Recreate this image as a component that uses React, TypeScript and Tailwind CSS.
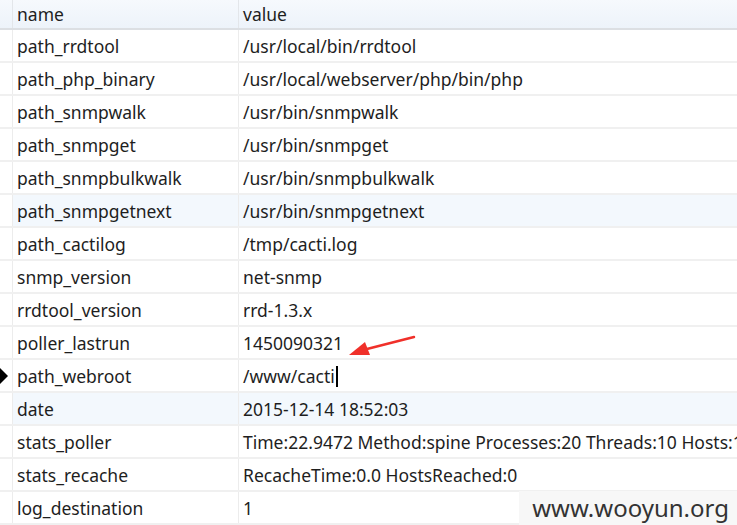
const rows: { name: string; value: string; hl?: boolean; cur?: boolean }[] = [
  { name: 'path_rrdtool', value: '/usr/local/bin/rrdtool' },
  { name: 'path_php_binary', value: '/usr/local/webserver/php/bin/php' },
  { name: 'path_snmpwalk', value: '/usr/bin/snmpwalk' },
  { name: 'path_snmpget', value: '/usr/bin/snmpget' },
  { name: 'path_snmpbulkwalk', value: '/usr/bin/snmpbulkwalk' },
  { name: 'path_snmpgetnext', value: '/usr/bin/snmpgetnext', hl: true },
  { name: 'path_cactilog', value: '/tmp/cacti.log' },
  { name: 'snmp_version', value: 'net-snmp' },
  { name: 'rrdtool_version', value: 'rrd-1.3.x' },
  { name: 'poller_lastrun', value: '1450090321' },
  { name: 'path_webroot', value: '/www/cacti', cur: true },
  { name: 'date', value: '2015-12-14 18:52:03', hl: true },
  { name: 'stats_poller', value: 'Time:22.9472 Method:spine Processes:20 Threads:10 Hosts:1' },
  { name: 'stats_recache', value: 'RecacheTime:0.0 HostsReached:0' },
  { name: 'log_destination', value: '1' },
]

export default function App() {
  return (
    <div
      className="relative w-[737px] h-[525px] overflow-hidden bg-white text-[#1e1e1e] text-[17.5px]"
      style={{ fontFamily: '"Noto Sans", "Open Sans", sans-serif' }}
    >
      {/* header */}
      <div className="grid grid-cols-[13px_226px_1fr] h-[30px] bg-gradient-to-b from-[#f6f9fd] to-[#edf3fa] border-b-2 border-[#dcdfe3]">
        <div className="border-r border-[#e3e6ea]" />
        <div className="border-r border-[#e3e6ea] pl-[4px] flex items-center">name</div>
        <div className="pl-[4px] flex items-center">value</div>
      </div>

      {rows.map((r) => (
        <div
          key={r.name}
          className={`grid grid-cols-[13px_226px_1fr] h-[33px] border-b-2 border-[#f0f0f0] ${
            r.hl ? 'bg-[#f3f8fd]' : 'bg-white'
          }`}
        >
          <div className="border-r border-[#ececec] bg-white flex items-center">
            {r.cur && (
              <svg width="9" height="16" viewBox="0 0 9 16">
                <path d="M0 0 L8 8 L0 16 Z" fill="#000" />
              </svg>
            )}
          </div>
          <div className="border-r border-[#ececec] pl-[4px] pt-[1px] flex items-center whitespace-nowrap">
            {r.name}
          </div>
          <div className="pl-[4px] pt-[1px] flex items-center whitespace-nowrap overflow-hidden">
            {r.value}
            {r.cur && <span className="inline-block w-[2px] h-[21px] bg-black ml-[1px]" />}
          </div>
        </div>
      ))}

      {/* red arrow */}
      <svg className="absolute left-[345px] top-[334px]" width="72" height="26" viewBox="0 0 72 26">
        <path d="M69 3 L18 16" stroke="#f0302a" strokeWidth="2.5" strokeLinecap="round" />
        <path d="M4 21 L20 8 L25 21 Z" fill="#f0302a" />
      </svg>

      {/* watermark */}
      <div className="absolute right-0 bottom-0 w-[218px] h-[34px] bg-[#f7f7f7] flex items-center justify-end pr-[8px] text-[24px] text-[#333] leading-none">
        www.wooyun.org
      </div>
    </div>
  )
}
